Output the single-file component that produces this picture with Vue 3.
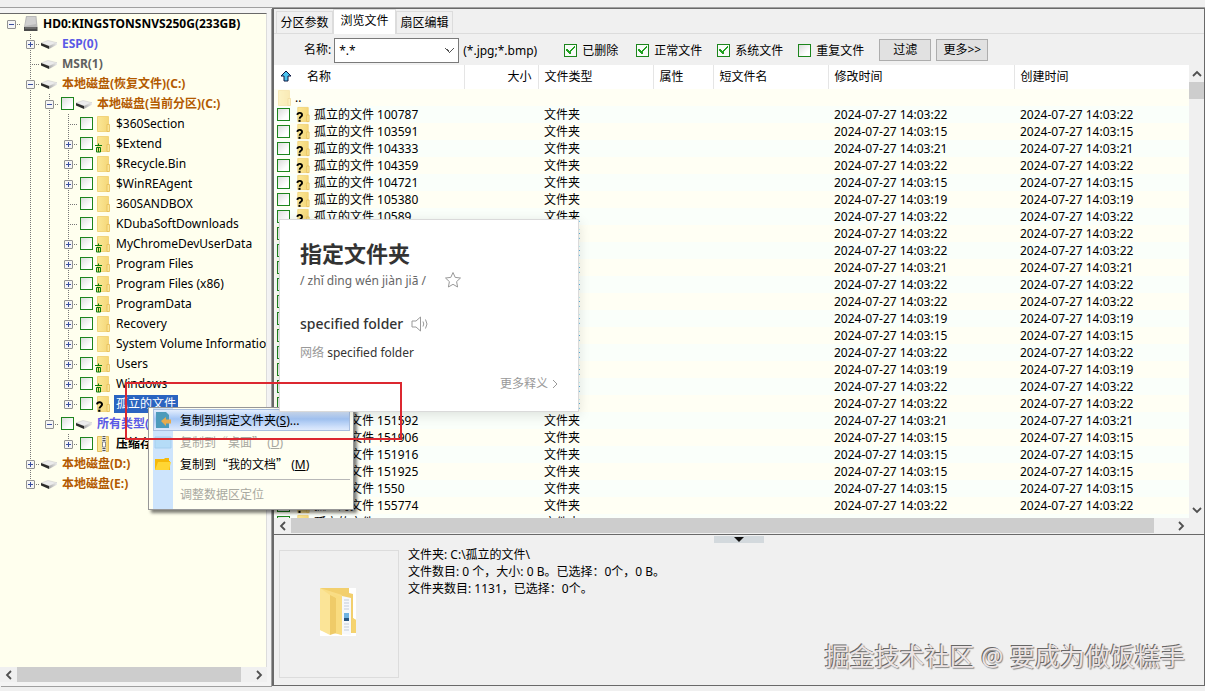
<script setup>
import { ref } from 'vue'

const pattern = ref('*.*')
const activeTab = ref(1)

const tabs = ['分区参数', '浏览文件', '扇区编辑']

const filters = ref([
  { id: 'deleted', label: '已删除', checked: true },
  { id: 'normal', label: '正常文件', checked: true },
  { id: 'system', label: '系统文件', checked: true },
  { id: 'dup', label: '重复文件', checked: false },
])

// guides: one entry per tree column. line = passes through, end = last child,
// root = no vertical part, none = empty column
const tree = [
  { label: 'HD0:KINGSTONSNVS250G(233GB)', icon: 'disk', guides: ['root'], box: '-', tone: 'bold' },
  { label: 'ESP(0)', icon: 'drive', guides: ['none', 'line'], box: '+', tone: 'blue' },
  { label: 'MSR(1)', icon: 'drive', guides: ['none', 'line'], tone: 'gray' },
  { label: '本地磁盘(恢复文件)(C:)', icon: 'drive', guides: ['none', 'line'], box: '-', tone: 'brown' },
  { label: '本地磁盘(当前分区)(C:)', icon: 'drive', guides: ['none', 'line', 'line'], box: '-', check: true, tone: 'brown' },
  ...[
    ['$360Section', false, false],
    ['$Extend', true, true],
    ['$Recycle.Bin', true, false],
    ['$WinREAgent', true, false],
    ['360SANDBOX', false, false],
    ['KDubaSoftDownloads', false, false],
    ['MyChromeDevUserData', true, true],
    ['Program Files', true, true],
    ['Program Files (x86)', true, true],
    ['ProgramData', true, true],
    ['Recovery', true, false],
    ['System Volume Information', true, false],
    ['Users', true, true],
    ['Windows', true, true],
  ].map(([label, open, trash]) => ({
    label,
    icon: 'folder',
    trash,
    guides: ['none', 'line', 'line', 'line'],
    box: open ? '+' : '',
    check: true,
  })),
  { label: '孤立的文件', icon: 'folder', lost: true, guides: ['none', 'line', 'line', 'end'], box: '+', check: true, selected: true },
  { label: '所有类型(', icon: 'drive', guides: ['none', 'line', 'end'], box: '-', check: true, tone: 'blue' },
  { label: '压缩存', icon: 'zip', guides: ['none', 'line', 'none', 'end'], box: '+', check: true, tone: 'bold' },
  { label: '本地磁盘(D:)', icon: 'drive', guides: ['none', 'line'], box: '+', tone: 'brown' },
  { label: '本地磁盘(E:)', icon: 'drive', guides: ['none', 'end'], box: '+', tone: 'brown' },
]

const files = [
  ['100787', '22'],
  ['103591', '15'],
  ['104333', '21'],
  ['104359', '22'],
  ['104721', '15'],
  ['105380', '19'],
  ['10589', '22'],
  ['', '22'],
  ['', '22'],
  ['', '21'],
  ['', '22'],
  ['', '22'],
  ['', '19'],
  ['', '15'],
  ['', '22'],
  ['', '19'],
  ['', '22'],
  ['', '22'],
  ['151592', '21'],
  ['151906', '15'],
  ['151916', '15'],
  ['151925', '15'],
  ['1550', '15'],
  ['155774', '22'],
  ['', '22'],
].map(([id, sec], i) => ({
  key: i,
  id,
  name: id || i === 24 ? `孤立的文件 ${id}` : '',
  time: `2024-07-27 14:03:${sec}`,
}))
</script>

<template>
  <div class="window">
    <svg class="defs" aria-hidden="true">
      <defs>
        <linearGradient id="g-folder" x1="0" y1="0" x2="1" y2="0">
          <stop offset="0" stop-color="#fae796" />
          <stop offset="1" stop-color="#f5d779" />
        </linearGradient>
        <linearGradient id="g-drive" x1="0" y1="0" x2="1" y2="0">
          <stop offset="0" stop-color="#a8a8a8" />
          <stop offset="1" stop-color="#ececec" />
        </linearGradient>
      </defs>
      <symbol id="i-folder" viewBox="0 0 18 18">
        <path d="M3.500 1.500h11v15h-11z" fill="url(#g-folder)" stroke="#f2d47c" />
        <path d="M13 9.500h2.500v7H13z" fill="#fbe596" stroke="#e6bd55" stroke-width=".8" />
      </symbol>
      <symbol id="i-trash" viewBox="0 0 18 18">
        <path d="M1 10.500h7M4.500 8.500v2M2.500 12.500h4v4.500h-4zM4.500 12v5" fill="none" stroke="#0c7d0c" />
      </symbol>
      <symbol id="i-lost" viewBox="0 0 18 18">
        <path d="M3 9.400c.4-3 5.200-2.800 5 .2-.2 2-2.600 1.800-2.600 4" fill="none" stroke="#000" stroke-width="2" />
        <path d="M4.200 14.600h2.200v2.200H4.200z" />
      </symbol>
      <symbol id="i-drive" viewBox="0 0 18 18">
        <path d="M1 8 8 5.500l9 2.200-8 3.300z" fill="#ececec" stroke="#c8c8c8" stroke-width=".5" />
        <path d="m1 8 8 3v3l-8-3.500z" fill="#2b2b2b" />
        <path d="m9 11 8-3.300v2L9 14z" fill="url(#g-drive)" />
      </symbol>
      <symbol id="i-disk" viewBox="0 0 18 18">
        <path d="M5 1h10.500l1 11H3z" fill="#b9b9b9" />
        <path d="M6 2h8.500l.5 7-11 2z" fill="#d0d0d0" />
        <path d="M3 12h13.500v4H3z" fill="#4a4a4a" />
        <path d="M4 12.500h11.500v1H4z" fill="#888" />
      </symbol>
      <symbol id="i-zip" viewBox="0 0 18 18">
        <path d="M3.500 1.500h11v15h-11z" fill="url(#g-folder)" stroke="#e2be5c" />
        <path d="M8 1h4v16H8z" fill="#e6e6e6" />
        <path d="M10 1v16" stroke="#555" stroke-width="3" stroke-dasharray="1 1" />
        <path d="M8.500 7h3v5h-3z" fill="#fff" stroke="#777" stroke-width=".8" />
      </symbol>
      <symbol id="i-up" viewBox="0 0 12 12">
        <path d="M6 1 11 6H8v5H4V6H1z" fill="#4cc3ee" stroke="#0a1440" />
      </symbol>
      <symbol id="i-left" viewBox="0 0 10 10">
        <path d="M7 1 3 5l4 4" fill="none" stroke="#505050" stroke-width="1.800" />
      </symbol>
      <symbol id="i-right" viewBox="0 0 10 10">
        <path d="m3 1 4 4-4 4" fill="none" stroke="#505050" stroke-width="1.800" />
      </symbol>
      <symbol id="i-top" viewBox="0 0 10 10">
        <path d="m1 7 4-4 4 4" fill="none" stroke="#505050" stroke-width="1.800" />
      </symbol>
      <symbol id="i-bottom" viewBox="0 0 10 10">
        <path d="m1 3 4 4 4-4" fill="none" stroke="#505050" stroke-width="1.800" />
      </symbol>
    </svg>

    <header class="strip"></header>

    <div class="panes">
      <aside class="tree-pane">
        <ul class="tree">
          <li v-for="node in tree" :key="node.label" class="node">
            <span
              v-for="(guide, i) in node.guides"
              :key="i"
              class="guide"
              :class="[guide, { branch: i === node.guides.length - 1 }]"
            >
              <button
                v-if="node.box && i === node.guides.length - 1"
                class="expander"
                :class="{ plus: node.box === '+' }"
                :aria-label="node.label"
              ></button>
            </span>
            <input v-if="node.check" type="checkbox" class="check tree-check" :aria-label="node.label" />
            <svg class="icon">
              <use :href="`#i-${node.icon}`" />
              <use v-if="node.trash" href="#i-trash" />
              <use v-if="node.lost" href="#i-lost" />
            </svg>
            <span class="label" :class="[node.tone, { selected: node.selected }]">{{ node.label }}</span>
          </li>
        </ul>
        <div class="hscroll">
          <button class="arrow" aria-label="left"><svg><use href="#i-left" /></svg></button>
          <div class="track"><div class="thumb tree-thumb"></div></div>
          <button class="arrow" aria-label="right"><svg><use href="#i-right" /></svg></button>
        </div>
      </aside>

      <main class="main-pane">
        <nav class="tabs">
          <button
            v-for="(tab, i) in tabs"
            :key="tab"
            class="tab"
            :class="{ active: i === activeTab }"
            @click="activeTab = i"
          >
            {{ tab }}
          </button>
        </nav>

        <form class="filter-bar" @submit.prevent>
          <label for="pattern">名称:</label>
          <select id="pattern" v-model="pattern" class="pattern">
            <option>*.*</option>
          </select>
          <span class="hint">(*.jpg;*.bmp)</span>
          <label v-for="f in filters" :key="f.id" class="filter">
            <input v-model="f.checked" type="checkbox" class="check" />
            {{ f.label }}
          </label>
          <button class="btn">过滤</button>
          <button class="btn">更多&gt;&gt;</button>
        </form>

        <div class="list">
          <div class="list-view">
            <table class="files">
              <colgroup>
                <col class="c-name" />
                <col class="c-size" />
                <col class="c-type" />
                <col class="c-attr" />
                <col class="c-short" />
                <col class="c-time" />
                <col />
              </colgroup>
              <thead>
                <tr>
                  <th class="name-head">
                    <div class="cell">
                      <svg class="up"><use href="#i-up" /></svg>
                      名称
                    </div>
                  </th>
                  <th class="right">大小</th>
                  <th>文件类型</th>
                  <th>属性</th>
                  <th>短文件名</th>
                  <th>修改时间</th>
                  <th>创建时间</th>
                </tr>
              </thead>
              <tbody>
                <tr>
                  <td class="name">
                    <div class="cell parent">
                      <svg class="icon faded"><use href="#i-folder" /></svg>
                      ..
                    </div>
                  </td>
                  <td colspan="6"></td>
                </tr>
                <tr v-for="file in files" :key="file.key">
                  <td class="name">
                    <div class="cell">
                      <input type="checkbox" class="check" :aria-label="file.name" />
                      <svg class="icon file-icon">
                        <use href="#i-folder" />
                        <use href="#i-lost" />
                      </svg>
                      {{ file.name }}
                    </div>
                  </td>
                  <td></td>
                  <td>文件夹</td>
                  <td></td>
                  <td></td>
                  <td>{{ file.time }}</td>
                  <td>{{ file.time }}</td>
                </tr>
              </tbody>
            </table>
          </div>
          <div class="vscroll">
            <button class="arrow" aria-label="up"><svg><use href="#i-top" /></svg></button>
            <div class="track"><div class="thumb"></div></div>
            <button class="arrow" aria-label="down"><svg><use href="#i-bottom" /></svg></button>
          </div>
        </div>
        <div class="hscroll list-hscroll">
          <button class="arrow" aria-label="left"><svg><use href="#i-left" /></svg></button>
          <div class="track"><div class="thumb list-thumb"></div></div>
          <button class="arrow" aria-label="right"><svg><use href="#i-right" /></svg></button>
        </div>

        <section class="details">
          <button class="collapse" aria-label="collapse"></button>
          <div class="details-body">
            <div class="preview">
              <svg viewBox="0 0 36 48">
                <path d="M0 0h36v48H0z" fill="#fff" />
                <path d="M1 0h28v5l4 1v24l3 2v13h-5l-8-2L1 42z" fill="#f2cf6d" />
                <path d="M22 8l9 2v37l-9-1z" fill="#f6f8fb" />
                <path d="M24 12h5M24 15h5M24 18h5M24 21h5M24 36h5M24 39h5M24 42h5" stroke="#c3ccd8" />
                <path d="M24 25h5v8h-5z" fill="#6fb3e2" />
                <path d="M24 30h5v3h-5z" fill="#28557f" />
                <path d="M0 0l22 7v40l-22-5z" fill="#f9dd85" />
                <path d="M0 0l10 7v40L0 42z" fill="#fbe497" />
                <path d="M10 7l6 3v35l-6 2z" fill="#efcb68" />
                <path d="M12 6l10 3v38l-6-2V10z" fill="#f9dc80" />
                <path d="M32 30l4 2v13h-4z" fill="#f5d36f" />
              </svg>
            </div>
            <div class="info">
              <p>文件夹: C:\孤立的文件\</p>
              <p>文件数目: 0 个，大小: 0 B。已选择：0个，0 B。</p>
              <p>文件夹数目: 1131，已选择：0个。</p>
            </div>
          </div>
        </section>
      </main>
    </div>

    <div class="menu" role="menu">
      <button class="item hot" role="menuitem">
        <svg viewBox="0 0 18 18">
          <path d="M2 1h10l3 3v13H2z" fill="#4d9bbb" />
          <path d="M7 10l5-4v2.500h5v4h-5V15z" fill="#e8ab4c" />
        </svg>
        <span>复制到指定文件夹(<u>S</u>)...</span>
      </button>
      <button class="item" role="menuitem" disabled>
        <svg viewBox="0 0 18 18">
          <path d="M1 4h16v11H1z" fill="#b5dcf7" stroke="#a5cfee" />
        </svg>
        <span><span class="cjk">复制到“桌面”</span> (<u>D</u>)</span>
      </button>
      <button class="item" role="menuitem">
        <svg viewBox="0 0 18 18">
          <path d="M1 4h9l1-1h4v3h1v9H1z" fill="#f5b90a" />
          <path d="M4 7h13l-2 8H1z" fill="#ffd634" />
        </svg>
        <span><span class="cjk">复制到“我的文档”</span> (<u>M</u>)</span>
      </button>
      <hr />
      <button class="item" role="menuitem" disabled>
        <span class="no-icon">调整数据区定位</span>
      </button>
    </div>

    <article class="popup">
      <h2>指定文件夹</h2>
      <div class="phonetic">
        <span>/ zhǐ dìng wén jiàn jiā /</span>
        <button aria-label="star">
          <svg class="star" viewBox="0 0 18 18">
            <path d="m9 1.500 2.200 4.900 5.300.6-3.900 3.600 1 5.400L9 13.300 4.400 16l1-5.400L1.500 7l5.300-.6z" fill="none" stroke="#999" stroke-linejoin="round" />
          </svg>
        </button>
      </div>
      <div class="sense">
        <strong>specified folder</strong>
        <button aria-label="speak">
          <svg class="speaker" viewBox="0 0 18 16">
            <path d="M1 5h4l4.500-4v14L5 11H1zM12 5.500q1.500 2.500 0 5M14.500 3.500q3 4.500 0 9" fill="none" stroke="#999" />
          </svg>
        </button>
      </div>
      <p class="web"><span>网络</span> specified folder</p>
      <a href="#" class="more">
        更多释义
        <svg viewBox="0 0 6 10"><path d="m1 1 4 4-4 4" fill="none" stroke="#999" /></svg>
      </a>
    </article>

    <div class="marker"></div>
    <p class="watermark">掘金技术社区 @ 要成为做饭糕手</p>
  </div>
</template>

<style>
body {
  margin: 0;
}
</style>

<style scoped>
.window {
  position: relative;
  box-sizing: border-box;
  height: 100vh;
  min-height: 600px;
  display: flex;
  flex-direction: column;
  padding-bottom: 5px;
  overflow: hidden;
  background: #f0f0f0;
  color: #000;
  font: 12px/17px 'Noto Sans', 'Noto Sans CJK SC', sans-serif;
}

.defs {
  position: absolute;
  width: 0;
  height: 0;
}

button {
  padding: 0;
  border: 0;
  background: none;
  color: inherit;
  font: inherit;
}

p,
h2,
ul {
  margin: 0;
  padding: 0;
}

.strip {
  flex: none;
  height: 7px;
  border-bottom: 1px solid #a0a0a0;
}

.panes {
  flex: 1;
  min-height: 0;
  display: flex;
}

/* tree */
.tree-pane {
  flex: none;
  width: 267px;
  display: flex;
  flex-direction: column;
  border: solid #f4f4f4;
  border-width: 5px 4px 4px 0;
  box-shadow: 1px 1px 0 #a0a0a0;
}

.tree {
  flex: 1;
  min-height: 0;
  overflow: hidden;
  border-top: 1px solid #696969;
  border-right: 1px solid #dcdcdc;
  background: #ffffee;
  list-style: none;
  padding-left: 2px;
}

.node {
  display: flex;
  align-items: center;
  height: 20px;
  white-space: nowrap;
}

.guide {
  flex: none;
  width: 19px;
  height: 20px;
  display: flex;
  align-items: center;
  justify-content: center;
  background-repeat: no-repeat;
}

.guide.line {
  background-image: repeating-linear-gradient(#777 0 1px, transparent 1px 2px);
  background-size: 1px 20px;
  background-position: 9px 0;
}

.guide.branch {
  background-image:
    repeating-linear-gradient(#777 0 1px, transparent 1px 2px),
    repeating-linear-gradient(90deg, #777 0 1px, transparent 1px 2px);
  background-size:
    1px 20px,
    10px 1px;
  background-position:
    9px 0,
    9px 10px;
}

.guide.end.branch {
  background-size:
    1px 10px,
    10px 1px;
}

.guide.root.branch {
  background-size:
    1px 0,
    10px 1px;
}

.expander {
  box-sizing: border-box;
  width: 9px;
  height: 9px;
  border: 1px solid #919191;
  border-radius: 1px;
  background:
    linear-gradient(#3b4fa0, #3b4fa0) center / 5px 1px no-repeat,
    #f5f5f5;
}

.expander.plus {
  background:
    linear-gradient(#3b4fa0, #3b4fa0) center / 5px 1px no-repeat,
    linear-gradient(#3b4fa0, #3b4fa0) center / 1px 5px no-repeat,
    #f5f5f5;
}

.check {
  appearance: none;
  flex: none;
  box-sizing: border-box;
  width: 13px;
  height: 13px;
  margin: 0;
  border: 1px solid #1c851c;
  background: linear-gradient(135deg, #dcdcdc, #fff 70%);
}

.check:checked {
  background:
    linear-gradient(-45deg, transparent 0 47%, #21a121 47% 62%, transparent 62%) 4px 1px / 6px 8px no-repeat,
    linear-gradient(45deg, transparent 0 35%, #21a121 35% 65%, transparent 65%) 1px 4px / 5px 5px no-repeat,
    #f8fbf8;
}

.tree-check {
  margin: 0 1px 1px 2px;
}

.icon {
  flex: none;
  width: 18px;
  height: 18px;
}

.label {
  margin-left: 2px;
  padding: 0 2px;
  line-height: 18px;
}

.bold,
.blue,
.gray,
.brown {
  font-weight: bold;
}

.blue {
  color: #5a5ae6;
}

.gray {
  color: #606060;
}

.brown {
  color: #b35a00;
}

.selected {
  background: #2a64c0;
  color: #fff;
}

/* scrollbars */
.hscroll {
  flex: none;
  display: flex;
  height: 15px;
  background: #f0f0f0;
}

.vscroll {
  flex: none;
  display: flex;
  flex-direction: column;
  width: 15px;
  background: #f0f0f0;
}

.arrow {
  flex: none;
  display: grid;
  place-items: center;
  width: 17px;
  height: 15px;
}

.vscroll .arrow {
  width: 15px;
  height: 17px;
}

.arrow svg {
  width: 10px;
  height: 10px;
}

.track {
  flex: 1;
  display: flex;
}

.thumb {
  background: #cdcdcd;
}

.tree-thumb {
  width: 96%;
}

.list-thumb {
  width: 98%;
}

.vscroll .thumb {
  width: 100%;
  height: 17px;
}

/* main */
.main-pane {
  flex: 1;
  min-width: 0;
  display: flex;
  flex-direction: column;
  margin-left: 1px;
  border: 1px solid #696969;
  border-left-width: 2px;
}

.tabs {
  flex: none;
  display: flex;
  align-items: flex-end;
  height: 24px;
  padding-left: 2px;
  border-bottom: 1px solid #dcdcdc;
}

.tab {
  box-sizing: border-box;
  width: 57px;
  height: 22px;
  border: 1px solid #dcdcdc;
  border-bottom: 0;
}

.tab.active {
  width: 63px;
  height: 25px;
  margin-bottom: -1px;
  padding-bottom: 4px;
  background: #fff;
}

.filter-bar {
  flex: none;
  display: flex;
  align-items: center;
  height: 31px;
  padding-left: 30px;
  white-space: nowrap;
}

.pattern {
  appearance: none;
  box-sizing: border-box;
  width: 125px;
  height: 25px;
  margin: 2px 4px 0 3px;
  padding: 0 4px;
  border: 1px solid #7a7a7a;
  border-radius: 0;
  background:
    linear-gradient(45deg, transparent 46%, #555 46% 60%, transparent 60%) right 8px center / 5px 5px no-repeat,
    linear-gradient(-45deg, transparent 46%, #555 46% 60%, transparent 60%) right 4px center / 5px 5px no-repeat,
    #fff;
  color: #000;
  font: inherit;
}

.hint {
  width: 101px;
}

.hint,
.filter {
  padding-top: 2px;
}

.filter {
  display: flex;
  align-items: center;
  gap: 5px;
  min-width: 57px;
  margin-right: 15px;
}

.btn {
  box-sizing: border-box;
  width: 52px;
  height: 22px;
  margin-right: 5px;
  border: 1px solid #adadad;
  background: #e1e1e1;
}

.list {
  flex: 1;
  min-height: 0;
  display: flex;
}

.list-view {
  flex: 1;
  min-width: 0;
  overflow: hidden;
  background: #fffff6;
}

.files {
  width: 100%;
  table-layout: fixed;
  border-collapse: collapse;
}

.c-name {
  width: 190px;
}

.c-size {
  width: 74px;
}

.c-type,
.c-short {
  width: 115px;
}

.c-attr {
  width: 60px;
}

.c-time {
  width: 186px;
}

th {
  height: 22px;
  padding: 0 6px 2px;
  border-right: 1px solid #e5e5e5;
  background: #fff;
  font-weight: normal;
  text-align: left;
}

th:last-child {
  border-right: 0;
}

th.right {
  text-align: right;
}

td {
  height: 17px;
  padding: 0 6px;
  line-height: 17px;
  white-space: nowrap;
}

tbody tr {
  background: #fffff4;
}

tbody tr:nth-child(even) {
  background: #fafffa;
}

td.name {
  padding: 0 3px;
}

th.name-head {
  padding: 0 3px 2px;
}

.cell {
  display: flex;
  align-items: center;
  height: 17px;
}

.up {
  width: 12px;
  height: 12px;
  margin: 0 15px 0 3px;
}

.parent .icon {
  margin: 0 2px 0 -2px;
}

.faded {
  opacity: 0.5;
}

.file-icon {
  height: 17px;
  margin: 0 2px 0 4px;
}

.list-hscroll {
  margin: 0 15px 1px 0;
}

/* details */
.details {
  flex: none;
  display: flex;
  flex-direction: column;
  align-items: center;
  height: 149px;
  padding-top: 1px;
  border-top: 1px solid #696969;
}

.collapse {
  width: 50px;
  height: 7px;
  background: #d3d9dd;
  display: grid;
  place-items: center;
}

.collapse::after {
  content: '';
  border: 5px solid transparent;
  border-top-color: #111;
  border-bottom: 0;
}

.details-body {
  align-self: stretch;
  display: flex;
  gap: 9px;
  padding: 3px 5px;
}

.preview {
  box-sizing: border-box;
  width: 120px;
  height: 128px;
  margin-top: 4px;
  padding: 0 2px 5px 0;
  display: grid;
  place-items: center;
  border: 1px solid #dcdcdc;
}

.preview svg {
  width: 36px;
  height: 48px;
}

/* menu */
.menu {
  position: absolute;
  left: 148px;
  top: 407px;
  box-sizing: border-box;
  width: 206px;
  padding: 1px 3px 4px 4px;
  border: 1px solid #979797;
  background: linear-gradient(90deg, transparent 4px, #cde4fc 4px 24px, #fffff2 24px) #fffff2;
  box-shadow: 3px 3px 3px rgba(0, 0, 0, 0.5);
}

.item {
  display: flex;
  align-items: center;
  gap: 8px;
  width: 100%;
  height: 22px;
  padding-left: 1px;
  text-align: left;
  white-space: nowrap;
}

.item svg {
  width: 18px;
  height: 18px;
}

.item:disabled {
  color: #a8a8a0;
}

.cjk {
  font-family: 'Noto Sans CJK SC', sans-serif;
}

.hot {
  padding-left: 0;
  border: 1px solid #a9bfe0;
  background: linear-gradient(#e3edfd, #a4c6f6 45%, #dfeafc);
}

.no-icon {
  padding-left: 26px;
}

.menu hr {
  margin: 4px 0 3px 27px;
  border: 0;
  border-top: 1px solid #b8b8b8;
}

/* dictionary popup */
.popup {
  position: absolute;
  left: 279px;
  top: 219px;
  box-sizing: border-box;
  width: 300px;
  height: 193px;
  padding: 19px 20px 0;
  border: 1px solid #dadada;
  background: #fff;
  box-shadow: 0 3px 12px rgba(0, 0, 0, 0.12);
  color: #333;
}

.popup h2 {
  font-size: 22px;
  line-height: 28px;
}

.phonetic {
  display: flex;
  align-items: center;
  gap: 18px;
  height: 26px;
  color: #666;
}

.star {
  display: block;
  width: 18px;
  height: 18px;
}

.sense {
  display: flex;
  align-items: center;
  gap: 8px;
  margin-top: 21px;
}

.sense strong {
  font-size: 14px;
  font-weight: 500;
  line-height: 20px;
}

.speaker {
  display: block;
  width: 18px;
  height: 16px;
}

.web {
  margin-top: 10px;
}

.web span,
.more {
  color: #999;
}

.more {
  display: flex;
  align-items: center;
  justify-content: flex-end;
  gap: 4px;
  margin-top: 14px;
  text-decoration: none;
}

.more svg {
  width: 6px;
  height: 10px;
}

.marker {
  position: absolute;
  left: 125px;
  top: 382px;
  box-sizing: border-box;
  width: 277px;
  height: 58px;
  border: 2px solid #dc2830;
  pointer-events: none;
}

.watermark {
  position: absolute;
  right: 20px;
  bottom: 17px;
  color: #ece4e4;
  font-size: 25px;
  line-height: 36px;
  text-shadow:
    -1px -1px 0 #666,
    1px 1px 1px #888;
}
</style>
